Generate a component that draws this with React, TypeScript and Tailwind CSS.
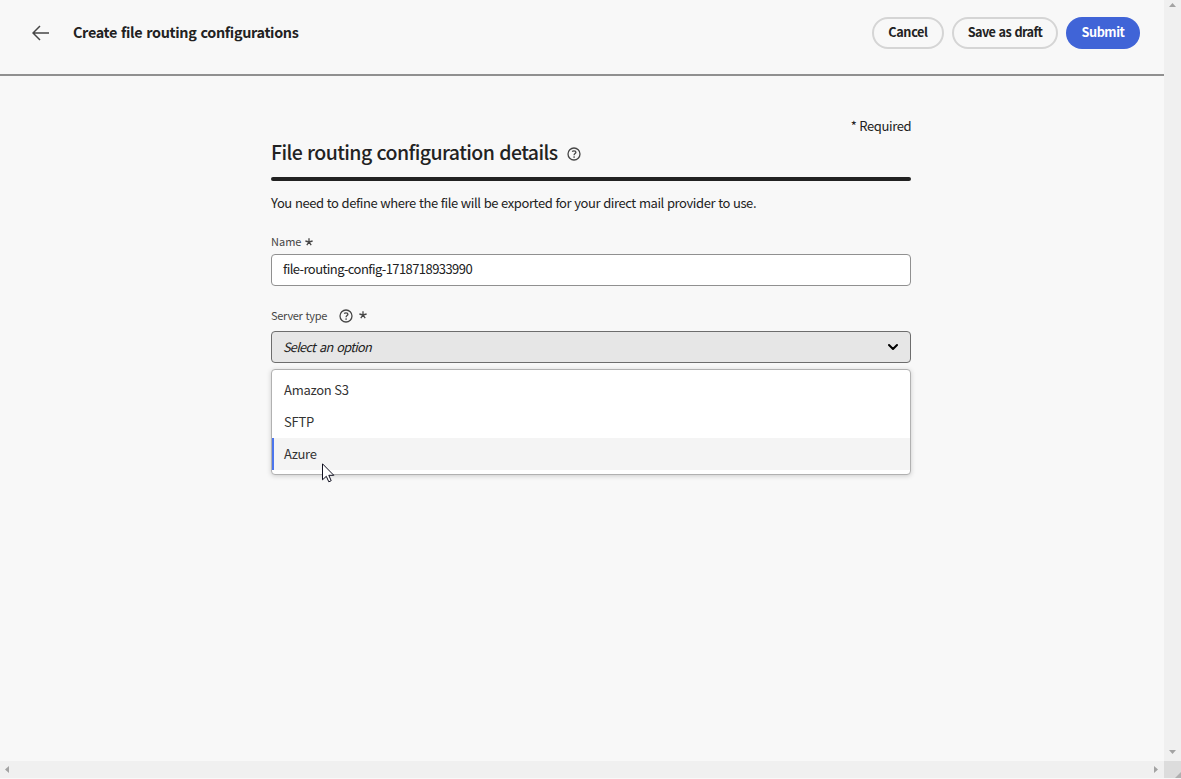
import React from "react";

function HelpIcon() {
  return (
    <svg width="14" height="14" viewBox="0 0 14 14" fill="none" className="block shrink-0">
      <circle cx="7" cy="7" r="6" stroke="#464646" strokeWidth="1.3" />
      <path d="M5.1 4.5C5.7 4 6.3 3.8 7 3.8c1.2 0 1.9.6 1.9 1.5 0 1.3-1.8 1.3-1.8 2.9" stroke="#464646" strokeWidth="1.3" />
      <circle cx="7.1" cy="10" r=".85" fill="#464646" />
    </svg>
  );
}

function Asterisk() {
  return (
    <svg width="8" height="8" viewBox="0 0 8 8" className="block shrink-0" stroke="#464646" strokeWidth="1.3">
      <path d="M4 .3V4M.4 3L4 4M7.6 3L4 4M1.8 7.2L4 4M6.2 7.2L4 4" />
    </svg>
  );
}

const options = ["Amazon S3", "SFTP", "Azure"];

export default function App() {
  return (
    <div className="grid h-[779px] w-[1181px] grid-cols-[1164px_17px] grid-rows-[761px_17px_1px] overflow-hidden bg-[#f8f8f8] font-['Noto_Sans_CJK_SC',sans-serif] text-[#222]">
      <div className="overflow-hidden">
        <header className="flex h-[76px] items-start border-b-2 border-[#909090] pt-[17px] pr-6 pl-8">
          <svg width="18" height="16" viewBox="0 0 18 16" fill="none" stroke="#464646" strokeWidth="1.5" className="mt-2 block">
            <path d="M17 8H1M8 1L1 8l7 7" />
          </svg>
          <h1 className="ml-[23px] grow text-[14.4px] leading-[30px] font-bold whitespace-nowrap">
            <span className="tracking-[-0.33px] [word-spacing:1px]">Create file routing configurations</span>
          </h1>
          <div className="flex gap-2 text-[12.7px] font-bold whitespace-nowrap">
            <button className="h-8 w-[72px] rounded-full border-2 border-[#d5d5d5] pb-[2px] leading-[26px]"><span className="tracking-[-0.35px]">Cancel</span></button>
            <button className="h-8 w-[106px] rounded-full border-2 border-[#d5d5d5] pb-[2px] leading-[26px]"><span className="tracking-[-0.6px] [word-spacing:1px]">Save as draft</span></button>
            <button className="h-8 w-[74px] rounded-full bg-[#4064d7] pb-[2px] leading-[30px] text-white"><span className="tracking-[-0.45px]">Submit</span></button>
          </div>
        </header>
        <main className="ml-[271px] flex w-[640px] flex-col whitespace-nowrap">
          <div className="mt-[40px] flex h-5 justify-end text-[13px] leading-5"><span className="-mr-[0.35px] tracking-[-0.35px]">* Required</span></div>
          <div className="mt-[2px] flex h-[30px] items-center gap-[9px]">
            <h2 className="-mt-[2px] text-[19.5px] leading-[30px] font-medium"><span className="tracking-[-0.57px] [word-spacing:1px]">File routing configuration details</span></h2>
            <span className="mt-[2px]"><HelpIcon /></span>
          </div>
          <div className="mt-[9px] h-1 rounded-full bg-[#222]" />
          <p className="mt-[12px] h-5 text-[13px] leading-5"><span className="tracking-[-0.41px] [word-spacing:0.55px]">You need to define where the file will be exported for your direct mail provider to use.</span></p>
          <div className="mt-[21px] flex h-4 items-center gap-1 text-[11px] leading-4 text-[#464646]"><span className="-mt-[2px]">Name</span><Asterisk /></div>
          <div className="mt-[4px] h-8 rounded border border-[#909090] bg-white pl-[11px] text-[13px] leading-[28px]"><span className="tracking-[-0.57px]">file-routing-config-1718718933990</span></div>
          <div className="mt-[22px] flex h-4 items-center text-[11px] leading-4 text-[#464646]">
            <span className="-mt-[2px] w-[68px] tracking-[-0.28px] [word-spacing:0.7px]">Server type</span><HelpIcon /><span className="mb-[2px] ml-[6px]"><Asterisk /></span>
          </div>
          <div className="mt-[7px] flex h-8 items-center justify-between rounded border border-[#6d6d6d] bg-[#e6e6e6] pr-3 pl-3 text-[12.7px] leading-[30px] text-[#222] italic">
            <span className="-ml-px tracking-[-0.7px] [word-spacing:1.7px]">Select an option</span>
            <svg width="10" height="8" viewBox="0 0 10 8" fill="none" stroke="#000" strokeWidth="2" strokeLinecap="round" strokeLinejoin="round"><path d="M1 2l4 4 4-4" /></svg>
          </div>
          <div className="relative mt-[6px] h-[106px] rounded border border-[#b1b1b1] bg-white py-1 shadow-[0_1px_5px_rgba(0,0,0,0.18)]">
            {options.map((option) => (
              <div key={option} className={option === "Azure" ? "h-8 border-l-2 border-[#4b75ec] bg-[#f4f4f4] pl-[10px] text-[13px] leading-8 text-[#333]" : "h-8 pl-3 text-[13px] leading-8 text-[#333]"}>
                <span className="tracking-[-0.26px]">{option}</span>
              </div>
            ))}
            <svg className="absolute top-[93px] left-[50px]" width="13" height="20" viewBox="0 0 13 20"><path d="M.5.8v16l3.8-3.5 2.5 5.5 2.4-1.1-2.4-5.4h5z" fill="white" stroke="#101020" /></svg>
          </div>
        </main>
      </div>
      <div className="flex flex-col items-center justify-between bg-[#f0f0f0] pt-[3px] pb-[7px]">
        <svg width="7" height="4" viewBox="0 0 7 4"><path d="M0 4L3.5 0 7 4z" fill="#a3a3a3" /></svg>
        <svg width="7" height="4" viewBox="0 0 7 4"><path d="M0 0h7L3.5 4z" fill="#a3a3a3" /></svg>
      </div>
      <div className="flex items-center justify-between bg-[#f0f0f0] pr-[6px] pl-[5px]">
        <svg width="4" height="7" viewBox="0 0 4 7"><path d="M4 0v7L0 3.5z" fill="#a3a3a3" /></svg>
        <svg width="4" height="7" viewBox="0 0 4 7"><path d="M0 0l4 3.5L0 7z" fill="#a3a3a3" /></svg>
      </div>
      <div className="flex items-end justify-end bg-[#dcdcdc]">
        <svg width="6" height="6" viewBox="0 0 6 6"><path d="M6 0v6H0z" fill="#b0b0b0" /></svg>
      </div>
    </div>
  );
}
